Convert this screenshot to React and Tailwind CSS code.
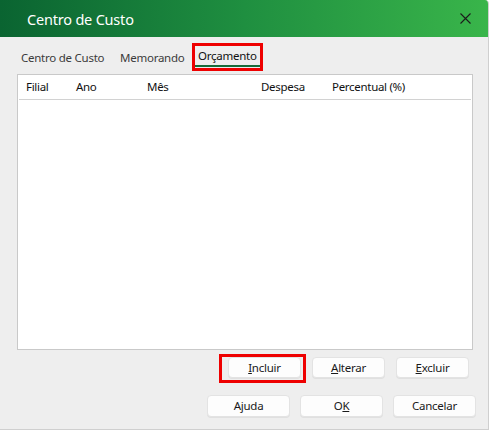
import React from "react";

const font = { fontFamily: '"Segoe UI", "Noto Sans", "Open Sans", sans-serif' };

function Btn({ w, h, children, highlight }) {
  return (
    <div className="relative">
      <button
        className={`${w} ${h} flex items-center justify-center rounded-[4px] bg-[#fdfdfd] border border-[#e3e3e3] text-[11.5px] tracking-[-0.25px] text-[#1a1a1a] shadow-[0_1px_0_rgba(0,0,0,0.06)]`}
      >
        {children}
      </button>
      {highlight && (
        <span className="absolute -left-[9px] -top-[3px] -right-[5px] -bottom-[5px] border-[3px] border-[#ee0000] pointer-events-none" />
      )}
    </div>
  );
}

export default function App() {
  return (
    <div className="w-[491px] h-[432px] bg-white" style={font}>
      <div className="w-[489px] h-[430px] bg-[#eeeeee] border-r border-b border-[#cfcfcf] rounded-tr-[4px] overflow-hidden flex flex-col">
        {/* Title bar */}
        <div className="h-[37px] shrink-0 flex items-center justify-between pl-[27px] pr-[16px] bg-gradient-to-r from-[#0a6431] via-[#1f8f40] to-[#39b54a]">
          <span className="text-white text-[14.5px] tracking-[-0.2px] leading-none mt-[1px]">Centro de Custo</span>
          <svg width="11" height="11" viewBox="0 0 11 11" className="mr-[1px]">
            <path d="M0.5 0.5 L10.5 10.5 M10.5 0.5 L0.5 10.5" stroke="#1b1b1b" strokeWidth="1.1" />
          </svg>
        </div>

        {/* Tabs */}
        <div className="h-[37px] shrink-0 flex items-center pl-[21px] text-[11.5px] tracking-[-0.25px]">
          <span className="w-[99px] text-[#3b3b3b] mt-[4px]">Centro de Custo</span>
          <span className="w-[72px] text-[#3b3b3b] mt-[4px]">Memorando</span>
          <div className="relative h-[28px] w-[71px] border-[3px] border-[#ee0000] mt-[3px] flex flex-col">
            <span className="pl-[3px] pt-[3px] text-[#111] leading-[14px]">Orçamento</span>
            <span className="mt-auto mb-[1px] h-[2px] bg-[#166b3a]" />
          </div>
        </div>

        {/* List */}
        <div className="ml-[17px] w-[456px] h-[276px] bg-white border border-[#c9c9c9] flex flex-col">
          <div className="h-[25px] mx-[1px] border-b border-[#d2d2d2] flex items-center pl-[7px] text-[11.5px] tracking-[-0.3px] text-[#111]">
            <span className="w-[50px]">Filial</span>
            <span className="w-[71px]">Ano</span>
            <span className="w-[114px]">Mês</span>
            <span className="w-[71px]">Despesa</span>
            <span>Percentual (%)</span>
          </div>
        </div>

        {/* Row 1 buttons */}
        <div className="mt-[7px] flex justify-end gap-[11px] pr-[19px]">
          <Btn w="w-[73px]" h="h-[21px]" highlight>
            <span><u>I</u>ncluir</span>
          </Btn>
          <Btn w="w-[73px]" h="h-[21px]">
            <span><u>A</u>lterar</span>
          </Btn>
          <Btn w="w-[73px]" h="h-[21px]">
            <span><u>E</u>xcluir</span>
          </Btn>
        </div>

        {/* Row 2 buttons */}
        <div className="mt-[17px] flex justify-end gap-[10px] pr-[12px]">
          <Btn w="w-[83px]" h="h-[22px]">Ajuda</Btn>
          <Btn w="w-[83px]" h="h-[22px]">
            <span>O<u>K</u></span>
          </Btn>
          <Btn w="w-[83px]" h="h-[22px]">Cancelar</Btn>
        </div>
      </div>
    </div>
  );
}
